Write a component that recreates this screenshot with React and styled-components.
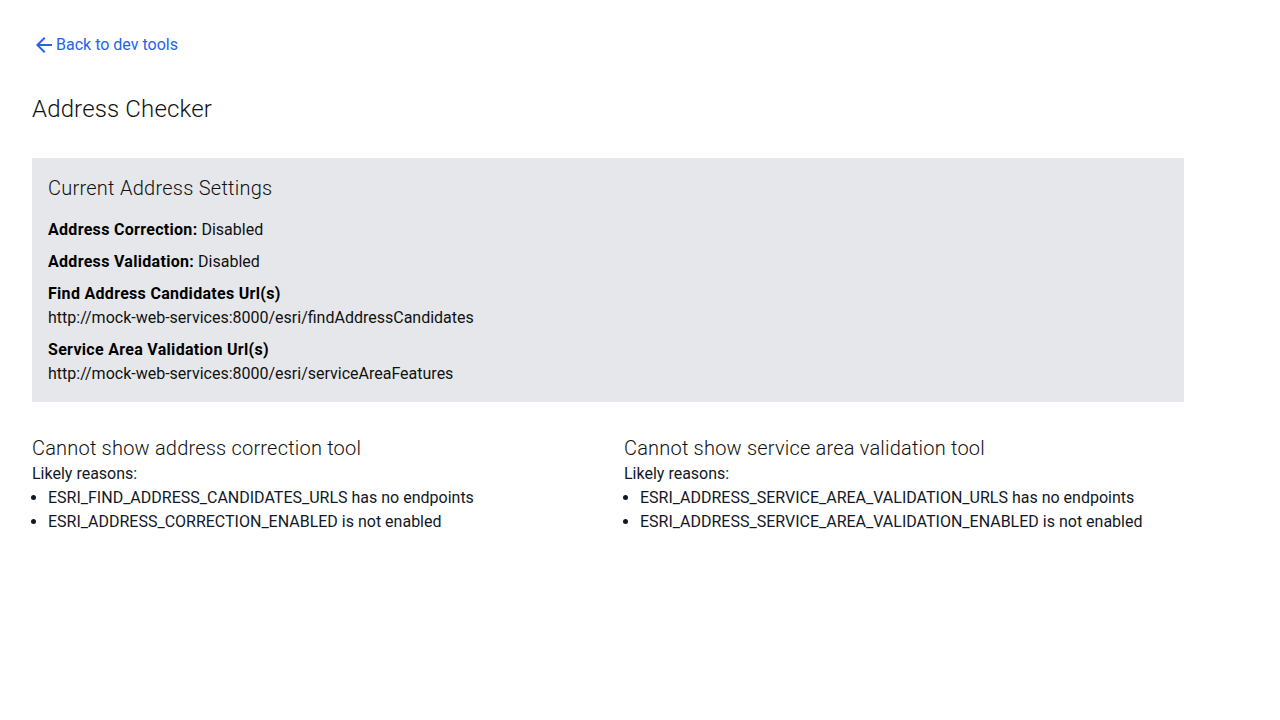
import React from "react";
import styled, { createGlobalStyle } from "styled-components";
import { MdArrowBack } from "react-icons/md";

const GlobalStyle = createGlobalStyle`
  * { box-sizing: border-box; }
  body {
    margin: 0;
    background: #fff;
    color: #111827;
    font-family: Roboto, "Liberation Sans", sans-serif;
    font-size: 16px;
    line-height: 24px;
  }
`;

const Page = styled.div`
  padding: 32px;
`;

const Container = styled.div`
  max-width: 1152px;
`;

const BackLink = styled.a`
  display: flex;
  align-items: center;
  width: fit-content;
  height: 24px;
  margin-top: 1px;
  color: #2563eb;
  text-decoration: none;
  cursor: pointer;
  &:hover { text-decoration: underline; }
`;

const PageTitle = styled.h1`
  margin: 36px 0 33px;
  font-size: 24px;
  line-height: 32px;
  font-weight: 300;
  letter-spacing: 0.15px;
  color: #111;
`;

const SettingsPanel = styled.section`
  background: #e5e7eb;
  padding: 16px;
`;

const PanelTitle = styled.h2`
  margin: 0 0 16px;
  font-size: 20px;
  line-height: 28px;
  font-weight: 300;
  letter-spacing: 0.25px;
  color: #111;
`;

const SettingList = styled.div`
  display: flex;
  flex-direction: column;
  gap: 8px;
`;

const Setting = styled.div`
  display: flex;
  flex-direction: ${(p) => (p.$stacked ? "column" : "row")};
  gap: ${(p) => (p.$stacked ? "0" : "4px")};
`;

const Label = styled.span`
  font-weight: 700;
  letter-spacing: 0.3px;
  color: #000;
`;

const Value = styled.span`
  color: #111;
`;

const Tools = styled.div`
  display: grid;
  grid-template-columns: 1fr 1fr;
  gap: 32px;
  margin-top: 32px;
`;

const ToolTitle = styled.h3`
  margin: 0;
  font-size: 20px;
  line-height: 28px;
  font-weight: 300;
  letter-spacing: 0.2px;
  color: #111;
`;

const Reasons = styled.ul`
  margin: 0;
  padding-left: 16px;
  list-style: disc;
`;

const settings = [
  { label: "Address Correction:", value: "Disabled" },
  { label: "Address Validation:", value: "Disabled" },
  {
    label: "Find Address Candidates Url(s)",
    value: "http://mock-web-services:8000/esri/findAddressCandidates",
    stacked: true,
  },
  {
    label: "Service Area Validation Url(s)",
    value: "http://mock-web-services:8000/esri/serviceAreaFeatures",
    stacked: true,
  },
];

const tools = [
  {
    title: "Cannot show address correction tool",
    reasons: [
      "ESRI_FIND_ADDRESS_CANDIDATES_URLS has no endpoints",
      "ESRI_ADDRESS_CORRECTION_ENABLED is not enabled",
    ],
  },
  {
    title: "Cannot show service area validation tool",
    reasons: [
      "ESRI_ADDRESS_SERVICE_AREA_VALIDATION_URLS has no endpoints",
      "ESRI_ADDRESS_SERVICE_AREA_VALIDATION_ENABLED is not enabled",
    ],
  },
];

export default function App() {
  return (
    <>
      <GlobalStyle />
      <Page>
        <Container>
          <BackLink>
            <MdArrowBack size={24} />
            Back to dev tools
          </BackLink>
          <PageTitle>Address Checker</PageTitle>

          <SettingsPanel>
            <PanelTitle>Current Address Settings</PanelTitle>
            <SettingList>
              {settings.map((s) => (
                <Setting key={s.label} $stacked={s.stacked}>
                  <Label>{s.label}</Label>
                  <Value>{s.value}</Value>
                </Setting>
              ))}
            </SettingList>
          </SettingsPanel>

          <Tools>
            {tools.map((t) => (
              <div key={t.title}>
                <ToolTitle>{t.title}</ToolTitle>
                <div>Likely reasons:</div>
                <Reasons>
                  {t.reasons.map((r) => (
                    <li key={r}>{r}</li>
                  ))}
                </Reasons>
              </div>
            ))}
          </Tools>
        </Container>
      </Page>
    </>
  );
}
